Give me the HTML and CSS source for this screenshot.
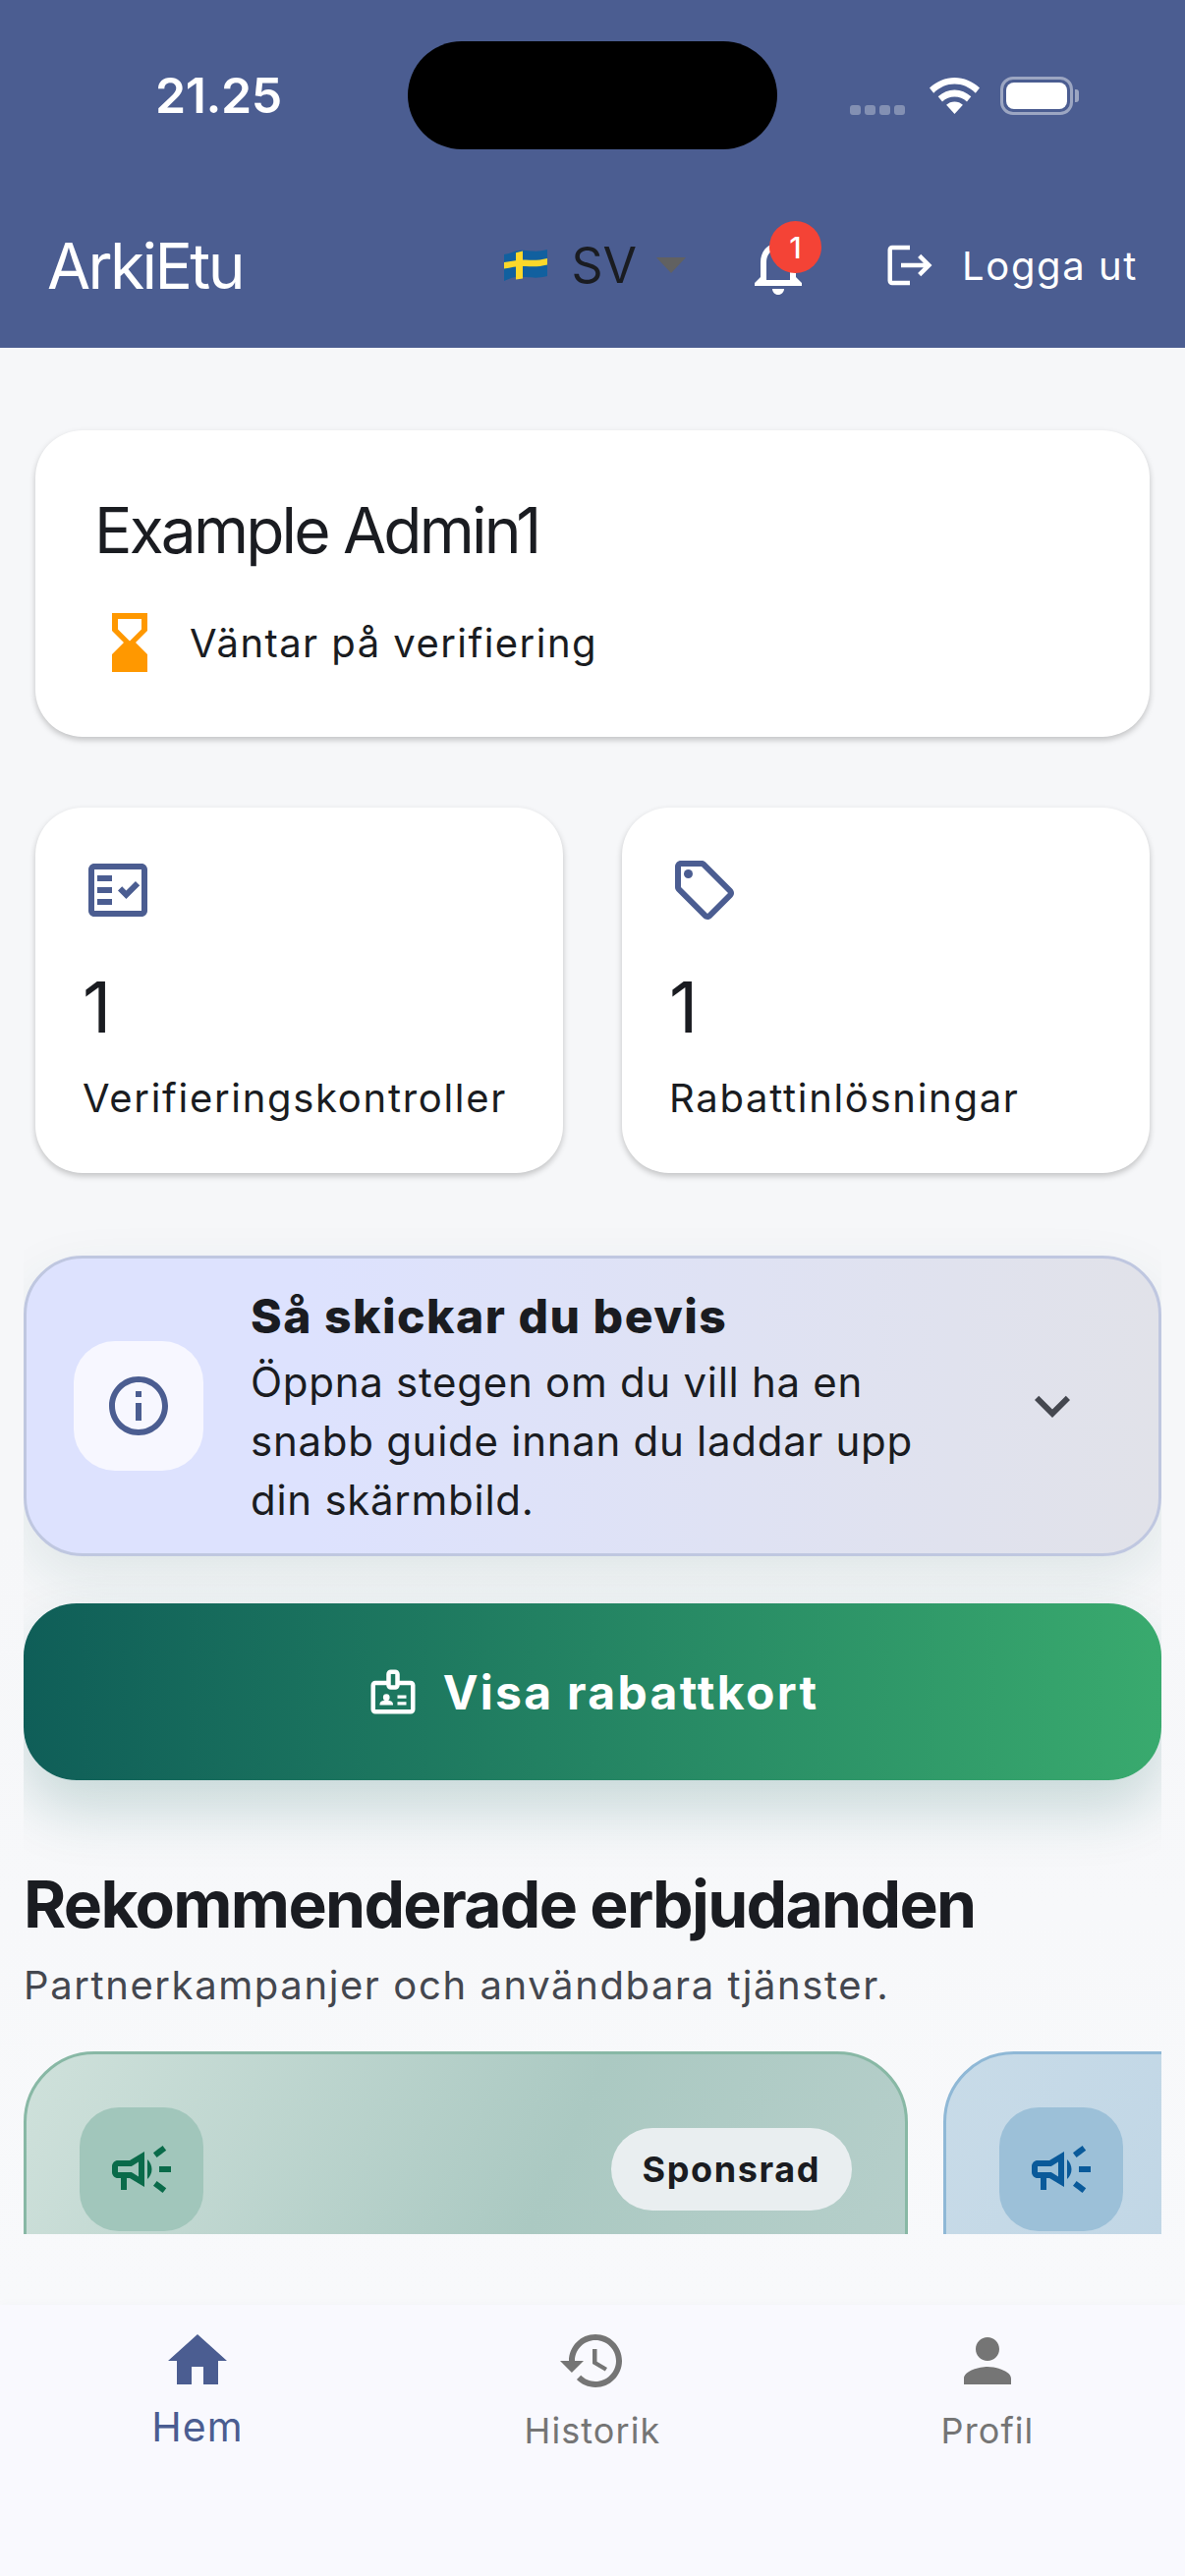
FILE: index.html
```html
<!DOCTYPE html>
<html lang="sv">
<head>
<meta charset="utf-8">
<title>ArkiEtu</title>
<link rel="stylesheet" href="styles.css">
</head>
<body>
<div class="app">
  <header class="header">
    <div class="status">
      <div class="time">21.25</div>
      <div class="notch"></div>
      <div class="status-right">
        <div class="signal"><i></i><i></i><i></i><i></i></div>
        <svg class="wifi" viewBox="0 0 51 37"><path d="M25.5 0C16 0 7.5 3.7 0 10.5l4.2 5.2C10.4 9.8 17.6 6.6 25.5 6.6s15.100 3.200 21.300 9.100l4.200-5.200C43.500 3.700 35 0 25.500 0z"/><path d="M25.500 12.500c-6.300 0-12 2.400-16.800 6.800l4.300 5.300c3.500-3.200 7.800-5 12.500-5s9 1.800 12.500 5l4.300-5.300c-4.800-4.400-10.500-6.800-16.800-6.800z"/><path d="M25.500 24.500c-3.200 0-6.100 1.200-8.400 3.300l8.400 9.200 8.400-9.200c-2.300-2.100-5.200-3.300-8.400-3.300z"/></svg>
        <div class="battery"><div class="battery-fill"></div></div>
        <div class="battery-nub"></div>
      </div>
    </div>
    <div class="appbar">
      <div class="brand">ArkiEtu</div>
      <div class="lang">
        <svg class="flag" viewBox="0 0 44 32"><path fill="#11609f" d="M0 5c8-1 12-5 22-4s14 1 22-1v27c-8 2-12 2-22 1S8 28 0 32z"/><path fill="#fcd82a" d="M12 3.200l7-1.800v28l-7 1z"/><path fill="#fcd82a" d="M0 13c8-1 14-3 22-2.500s14 .5 22-1.500v6.500c-8 2-14 2-22 1.500S8 18 0 19.500z"/></svg>
        <span class="lang-code">SV</span>
        <span class="lang-caret"></span>
      </div>
      <div class="bell">
        <svg class="icon-72 white" viewBox="0 0 24 24"><path d="M12 22c1.100 0 2-.9 2-2h-4c0 1.100.9 2 2 2zm6-6v-5c0-3.070-1.630-5.640-4.500-6.320V4c0-.83-.67-1.500-1.500-1.500s-1.500.67-1.500 1.500v.68C7.640 5.360 6 7.920 6 11v5l-2 2v1h16v-1l-2-2zm-2 1H8v-6c0-2.480 1.510-4.500 4-4.500s4 2.020 4 4.500v6z"/></svg>
        <span class="badge">1</span>
      </div>
      <div class="logout">
        <svg class="icon-54 white" viewBox="0 0 24 24"><path d="M17 7l-1.410 1.410L18.170 11H8v2h10.170l-2.580 2.580L17 17l5-5zM4 5h8V3H4c-1.100 0-2 .9-2 2v14c0 1.100.9 2 2 2h8v-2H4V5z"/></svg>
        <span>Logga ut</span>
      </div>
    </div>
  </header>

  <main class="main">
    <section class="card profile">
      <h1 class="profile-name">Example Admin1</h1>
      <div class="profile-state">
        <svg class="icon-72 orange" viewBox="0 0 24 24"><path d="M18 22l-.01-6L14 12l3.990-4.010L18 2H6v6l4 4-4 3.990V22h12zM8 7.500V4h8v3.500l-4 4-4-4z"/></svg>
        <span>Väntar på verifiering</span>
      </div>
    </section>

    <section class="stats">
      <div class="card stat">
        <svg class="icon-72 brand-fill" viewBox="0 0 24 24"><path d="M20 3H4c-1.100 0-2 .9-2 2v14c0 1.100.9 2 2 2h16c1.100 0 2-.9 2-2V5c0-1.100-.9-2-2-2zm0 16H4V5h16v14z"/><path d="M19.410 10.420L17.990 9l-3.170 3.170-1.410-1.420L12 12.160 14.820 15zM5 7h5v2H5zM5 11h5v2H5zM5 15h5v2H5z"/></svg>
        <div class="stat-num">1</div>
        <div class="stat-label">Verifieringskontroller</div>
      </div>
      <div class="card stat">
        <svg class="icon-72 brand-fill" viewBox="0 0 24 24"><path d="M21.410 11.580l-9-9C12.050 2.220 11.550 2 11 2H4c-1.100 0-2 .9-2 2v7c0 .55.22 1.050.59 1.420l9 9c.36.36.86.58 1.410.58s1.050-.22 1.410-.59l7-7c.37-.36.59-.86.59-1.410s-.23-1.060-.59-1.420zM13 20.010L4 11V4h7v-.01l9 9-7 7.020z"/><circle cx="6.500" cy="6.500" r="1.500"/></svg>
        <div class="stat-num">1</div>
        <div class="stat-label">Rabattinlösningar</div>
      </div>
    </section>

    <section class="actions">
      <div class="guide">
        <div class="guide-icon">
          <svg class="icon-72 brand-fill" viewBox="0 0 24 24"><path d="M11 7h2v2h-2zm0 4h2v6h-2zm1-9C6.480 2 2 6.480 2 12s4.480 10 10 10 10-4.480 10-10S17.520 2 12 2zm0 18c-4.410 0-8-3.590-8-8s3.590-8 8-8 8 3.590 8 8-3.590 8-8 8z"/></svg>
        </div>
        <div class="guide-text">
          <div class="guide-title">Så skickar du bevis</div>
          <div class="guide-body">Öppna stegen om du vill ha en<br>snabb guide innan du laddar upp<br>din skärmbild.</div>
        </div>
        <svg class="icon-72 grey-dark guide-chevron" viewBox="0 0 24 24"><path d="M16.590 8.590L12 13.170 7.410 8.590 6 10l6 6 6-6z"/></svg>
      </div>
      <div class="cta">
        <svg class="icon-54 white" viewBox="0 0 24 24"><path d="M20 7h-5V4c0-1.100-.9-2-2-2h-2c-1.100 0-2 .9-2 2v3H4c-1.100 0-2 .9-2 2v11c0 1.100.9 2 2 2h16c1.100 0 2-.9 2-2V9c0-1.100-.9-2-2-2zM11 4h2v5h-2V4zm9 16H4V9h5c0 1.100.9 2 2 2h2c1.100 0 2-.9 2-2h5v11z"/><path d="M14 13.500h4V15h-4zM14 16.500h4V18h-4z"/><circle cx="9" cy="14.500" r="1.500"/><path d="M11.080 16.180c-.64-.28-1.340-.43-2.080-.43s-1.440.15-2.080.43C6.360 16.420 6 16.960 6 17.570V18h6v-.43c0-.61-.36-1.150-.92-1.390z"/></svg>
        <span>Visa rabattkort</span>
      </div>
    </section>

    <section class="offers">
      <h2 class="offers-title">Rekommenderade erbjudanden</h2>
      <p class="offers-sub">Partnerkampanjer och användbara tjänster.</p>
      <div class="offers-row">
        <article class="offer offer-green">
          <div class="offer-icon offer-icon-green">
            <svg class="icon-72" viewBox="0 0 24 24"><path d="M18 11v2h4v-2h-4zm-2 6.610c.96.71 2.210 1.650 3.200 2.390.4-.53.8-1.070 1.200-1.600-.99-.74-2.240-1.680-3.200-2.400-.4.54-.8 1.080-1.200 1.610zM20.400 5.600c-.4-.53-.8-1.070-1.200-1.600-.99.74-2.240 1.680-3.200 2.400.4.53.8 1.070 1.200 1.600.96-.72 2.210-1.650 3.200-2.400zM4 9c-1.100 0-2 .9-2 2v2c0 1.100.9 2 2 2h1v4h2v-4h1l5 3V6L8 9H4zm5.030 1.710L11 9.530v4.940l-1.970-1.180-.48-.29H4v-2h4.550l.48-.29zM15.500 12c0-1.330-.58-2.530-1.500-3.350v6.690c.92-.81 1.500-2.010 1.500-3.340z"/></svg>
          </div>
          <span class="pill">Sponsrad</span>
        </article>
        <article class="offer offer-blue">
          <div class="offer-icon offer-icon-blue">
            <svg class="icon-72" viewBox="0 0 24 24"><path d="M18 11v2h4v-2h-4zm-2 6.610c.96.71 2.210 1.650 3.200 2.390.4-.53.8-1.070 1.200-1.600-.99-.74-2.240-1.680-3.200-2.400-.4.54-.8 1.080-1.200 1.610zM20.400 5.600c-.4-.53-.8-1.070-1.200-1.600-.99.74-2.240 1.680-3.200 2.400.4.53.8 1.070 1.200 1.600.96-.72 2.210-1.650 3.200-2.400zM4 9c-1.100 0-2 .9-2 2v2c0 1.100.9 2 2 2h1v4h2v-4h1l5 3V6L8 9H4zm5.030 1.710L11 9.530v4.940l-1.970-1.180-.48-.29H4v-2h4.550l.48-.29zM15.500 12c0-1.330-.58-2.530-1.500-3.350v6.690c.92-.81 1.500-2.010 1.500-3.340z"/></svg>
          </div>
        </article>
      </div>
    </section>
  </main>

  <nav class="nav">
    <div class="nav-item nav-active">
      <svg class="icon-72" viewBox="0 0 24 24"><path d="M10 20v-6h4v6h5v-8h3L12 3 2 12h3v8z"/></svg>
      <span>Hem</span>
    </div>
    <div class="nav-item">
      <svg class="icon-72" viewBox="0 0 24 24"><path d="M13 3c-4.970 0-9 4.030-9 9H1l3.890 3.890.07.14L9 12H6c0-3.870 3.130-7 7-7s7 3.130 7 7-3.130 7-7 7c-1.930 0-3.680-.79-4.940-2.060l-1.420 1.420C8.270 19.990 10.510 21 13 21c4.970 0 9-4.030 9-9s-4.030-9-9-9zm-1 5v5l4.280 2.540.72-1.210-3.500-2.080V8H12z"/></svg>
      <span>Historik</span>
    </div>
    <div class="nav-item">
      <svg class="icon-72" viewBox="0 0 24 24"><path d="M12 12c2.210 0 4-1.790 4-4s-1.790-4-4-4-4 1.790-4 4 1.790 4 4 4zm0 2c-2.670 0-8 1.340-8 4v2h16v-2c0-2.660-5.330-4-8-4z"/></svg>
      <span>Profil</span>
    </div>
  </nav>
</div>
</body>
</html>
```
FILE: styles.css
```css
* { box-sizing: border-box; }
html, body { margin: 0; padding: 0; }
body { font-family: "Inter", "Noto Sans", sans-serif; color: #1a1c21; background: #f6f7f9; }
.app { width: 1206px; height: 2622px; display: flex; flex-direction: column; overflow: hidden; }
svg { display: block; flex: none; fill: currentColor; }
.icon-72 { width: 72px; height: 72px; }
.icon-54 { width: 54px; height: 54px; }
.white { color: #fff; }
.orange { color: #ff9800; }
.brand-fill { color: #4b5d91; }
.grey-dark { color: #44474f; }

.header { height: 354px; background: #4b5d91; flex: none; color: #fff; }
.status { height: 186px; padding-top: 8px; display: grid; grid-template-columns: 415px 376px 1fr; align-items: center; }
.time { padding-left: 158px; font-size: 50px; font-weight: 600; letter-spacing: -0.4px; line-height: 1; }
.notch { height: 110px; background: #000; border-radius: 55px; }
.status-right { display: flex; align-items: center; padding-left: 74px; }
.signal { display: flex; gap: 4px; align-self: flex-end; padding-top: 18px; }
.signal i { width: 11px; height: 10px; border-radius: 3px; background: #8390b3; }
.wifi { width: 51px; height: 37px; margin-left: 25px; }
.battery { width: 74px; height: 39px; margin-left: 21px; border: 3px solid rgba(255,255,255,.45); border-radius: 13px; padding: 3px; }
.battery-fill { width: 100%; height: 100%; background: #fff; border-radius: 8px; }
.battery-nub { width: 4px; height: 13px; margin-left: 2px; border-radius: 0 3px 3px 0; background: rgba(255,255,255,.45); }

.appbar { height: 168px; display: flex; align-items: center; padding: 0 48px; }
.brand { font-size: 64px; letter-spacing: -2.6px; line-height: 1; margin-top: 2px; }
.lang { margin-left: auto; display: flex; align-items: center; color: #1a1c21; }
.flag { width: 44px; height: 32px; }
.lang-code { font-size: 50px; line-height: 1; margin-left: 25px; }
.lang-caret { width: 0; height: 0; margin-left: 20px; border-left: 15px solid transparent; border-right: 15px solid transparent; border-top: 16px solid #616161; }
.bell { position: relative; margin-left: 58px; width: 72px; height: 72px; }
.badge { position: absolute; top: -9px; left: 27px; width: 53px; height: 53px; border-radius: 50%; background: #f44336; color: #fff; font-size: 30px; font-weight: 500; display: flex; align-items: center; justify-content: center; }
.logout { display: flex; align-items: center; margin-left: 71px; font-size: 40px; letter-spacing: 1.6px; font-weight: 400; }
.logout span { margin-left: 26px; }

.main { flex: 1; min-height: 0; display: flex; flex-direction: column; padding-top: 84px; background: linear-gradient(180deg, #f6f7f9 0%, #f6f7f9 60%, #f8f9fb 100%); }
.card { background: #fff; border-radius: 48px; box-shadow: 0 3px 6px rgba(0,0,0,.22); }
.profile { margin: 0 36px; height: 312px; padding: 66px 60px 0; }
.profile-name { margin: 0; font-size: 64px; font-weight: 400; letter-spacing: -2.8px; line-height: 72px; }
.profile-state { display: flex; align-items: center; margin-top: 42px; font-size: 40px; letter-spacing: 1.45px; }
.profile-state span { margin-left: 25px; }

.stats { margin: 72px 36px 0; display: grid; grid-template-columns: 537px 537px; column-gap: 60px; }
.stat { height: 372px; padding: 48px 48px 0; }
.stat-num { font-size: 72px; line-height: 84px; margin-top: 41px; }
.stat-label { font-size: 40px; letter-spacing: 1.7px; line-height: 56px; margin-top: 23px; }

.actions { margin: 30px 24px 0; padding: 54px 0 90px; overflow: hidden; display: flex; flex-direction: column; gap: 48px; }
.guide { height: 306px; border: 3px solid #bfc7e0; border-radius: 60px; background: linear-gradient(90deg, #dde2fe 0%, #dde2fe 25%, #e1e2e9 100%); display: flex; align-items: center; padding: 0 48px; box-shadow: 0 24px 60px rgba(20,90,80,.1); }
.guide-icon { width: 132px; height: 132px; border-radius: 42px; background: #f7f7ff; display: flex; align-items: center; justify-content: center; flex: none; }
.guide-text { margin-left: 48px; flex: 1; padding-top: 8px; }
.guide-title { font-size: 48px; font-weight: 800; line-height: 54px; letter-spacing: 1.5px; }
.guide-body { font-size: 42px; line-height: 60px; letter-spacing: 0.72px; margin-top: 10px; }
.guide-chevron { margin-right: 24px; }
.cta { height: 180px; border-radius: 54px; background: linear-gradient(90deg, #0f5e58 0%, #39aa6e 100%); color: #fff; display: flex; align-items: center; justify-content: center; gap: 24px; font-size: 48px; font-weight: 700; letter-spacing: 2.3px; box-shadow: 0 30px 60px rgba(15,94,88,.2); }

.offers-title { margin: 0 24px; font-size: 66px; font-weight: 700; letter-spacing: -1.7px; line-height: 72px; }
.offers-sub { margin: 19px 24px 0; font-size: 40px; letter-spacing: 1.6px; line-height: 56px; color: #44474f; }
.offers-row { margin: 39px 24px 0; height: 186px; overflow: hidden; display: flex; gap: 36px; }
.offer { flex: none; width: 900px; height: 400px; border-radius: 72px; border: 3px solid; padding: 54px; display: flex; align-items: flex-start; justify-content: space-between; }
.offer-green { border-color: #88b8a5; background: linear-gradient(115deg, #cfe1db 0%, #abc9c2 55%, #b8d0cc 100%); color: #0a6b4a; }
.offer-blue { border-color: #8fb8d6; background: linear-gradient(115deg, #c8dbe8 0%, #b0cce0 100%); color: #0a5a9a; }
.offer-icon { width: 126px; height: 126px; border-radius: 40px; flex: none; display: flex; align-items: center; justify-content: center; }
.offer-icon-green { background: #a1c6bb; }
.offer-icon-blue { background: #9cc0d8; }
.pill { margin: 21px 0 0; padding: 0 32px; height: 84px; border-radius: 42px; background: #e9eef0; color: #1a1c21; font-size: 36px; font-weight: 700; letter-spacing: 1.6px; display: flex; align-items: center; }

.nav { flex: none; height: 276px; background: #f9f9fe; display: grid; grid-template-columns: 402px 402px 402px; padding-top: 21px; box-shadow: 0 -2px 10px rgba(0,0,0,.02); }
.nav-item { display: flex; flex-direction: column; align-items: center; color: #757575; font-size: 36px; letter-spacing: 1.1px; line-height: 44px; }
.nav-item span { margin-top: 13px; }
.nav-active { color: #4b5d91; font-size: 41px; }
.nav-active span { margin-top: 9px; }
```
